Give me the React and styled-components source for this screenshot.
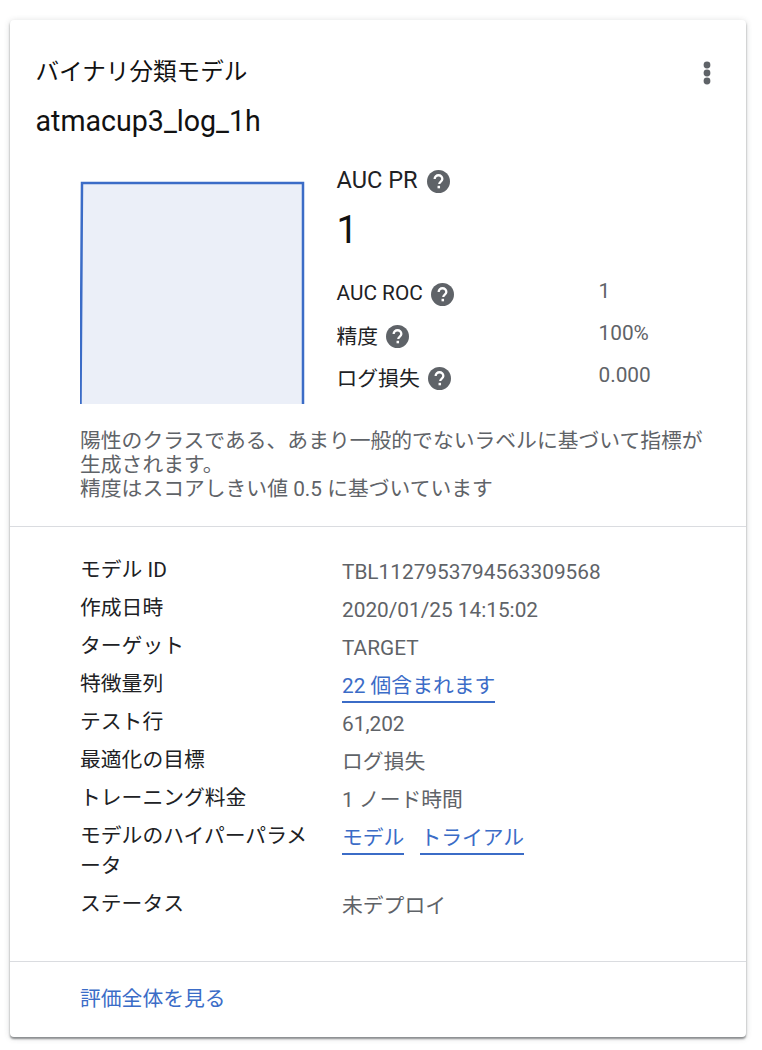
import React from "react";
import styled, { createGlobalStyle } from "styled-components";

const GlobalStyle = createGlobalStyle`
  html, body {
    margin: 0;
    padding: 0;
    background: #fff;
  }
  body {
    font-family: Roboto, "Noto Sans CJK JP", sans-serif;
  }
`;

const Page = styled.div`
  padding: 20px 16px 13px 10px;
`;

const Card = styled.div`
  height: 1017px;
  box-sizing: border-box;
  background: #fff;
  border-radius: 4px;
  box-shadow: 0 2px 2px rgba(60, 64, 67, 0.55), 0 1px 6px rgba(60, 64, 67, 0.2);
  display: flex;
  flex-direction: column;
`;

const Header = styled.div`
  display: flex;
  justify-content: space-between;
  padding: 35px 34px 0 25.5px;
`;

const Titles = styled.div`
  color: #111;
  font-size: 23.6px;
`;

const TitleLine = styled.div`
  line-height: 34px;
  height: 34px;
  margin-bottom: 15px;
`;

const ModelName = styled(TitleLine)`
  font-size: 28.6px;
`;

const MoreButton = styled.svg`
  width: 10px;
  height: 24px;
  margin-top: 6px;
  fill: #5f6368;
`;

const Summary = styled.div`
  display: flex;
  padding: 0 0 0 70px;
`;

const Chart = styled.svg`
  width: 226px;
  height: 224px;
  margin-top: 27px;
  display: block;
`;

const Metrics = styled.div`
  margin-left: 30.5px;
  margin-top: 12px;
  width: 340px;
`;

const MetricHead = styled.div`
  display: flex;
  align-items: center;
  gap: 9px;
  font-size: 23.6px;
  color: #202124;
  height: 30px;
`;

const BigNumber = styled.div`
  font-size: 38px;
  line-height: 44px;
  height: 44px;
  margin: 13px 0 26px;
  color: #111;
`;

const MetricRow = styled.div`
  display: grid;
  grid-template-columns: 262px 1fr;
  height: 42px;
  font-size: 20.8px;
  color: #202124;
`;

const MetricLabel = styled.div`
  display: flex;
  align-items: center;
  gap: 8px;
  height: 30px;
`;

const MetricValue = styled.div`
  color: #5f6368;
  line-height: 26px;
`;

const HelpIcon = styled.svg`
  width: 23px;
  height: 23px;
  flex: none;
  margin-top: 3px;
`;

const Note = styled.div`
  margin: 25px 0 0 70px;
  padding-bottom: 25px;
  width: 635px;
  font-size: 20.8px;
  line-height: 24px;
  color: #5f6368;
`;

const Divider = styled.div`
  height: 1px;
  background: #dadce0;
  flex: none;
`;

const Details = styled.div`
  padding: 24px 0 0 70px;
  flex: 1;
`;

const DetailRow = styled.div`
  display: grid;
  grid-template-columns: 262px 1fr;
  font-size: 20.8px;
  line-height: 30px;
  color: #202124;
`;

const DetailLabel = styled.div`
  width: 232px;
  padding: 4px 0;
`;

const DetailValue = styled.div`
  color: #5f6368;
  display: flex;
  gap: 16px;
  align-items: flex-start;
  padding-top: 6px;
`;

const UnderLink = styled.a`
  color: #3b6cc7;
  line-height: 30px;
  border-bottom: 2px solid #3b6cc7;
`;

const Footer = styled.div`
  height: 75px;
  box-sizing: border-box;
  padding: 0 0 5px 70px;
  display: flex;
  align-items: center;
  font-size: 20.8px;
  color: #3b6cc7;
`;

const Help = () => (
  <HelpIcon viewBox="0 0 24 24">
    <circle cx="12" cy="12" r="12" fill="#5f6368" />
    <path
      d="M8 9.5a4 4 0 0 1 8 0c0 2.6-3.2 2.7-3.2 5.2"
      fill="none"
      stroke="#fff"
      strokeWidth="2.4"
    />
    <rect x="11" y="16.5" width="2.6" height="2.6" fill="#fff" />
  </HelpIcon>
);

const details = [
  { label: "モデル ID", value: "TBL1127953794563309568" },
  { label: "作成日時", value: "2020/01/25 14:15:02" },
  { label: "ターゲット", value: "TARGET" },
  { label: "特徴量列", links: ["22 個含まれます"] },
  { label: "テスト行", value: "61,202" },
  { label: "最適化の目標", value: "ログ損失" },
  { label: "トレーニング料金", value: "1 ノード時間" },
  { label: "モデルのハイパーパラメータ", links: ["モデル", "トライアル"] },
  { label: "ステータス", value: "未デプロイ" },
];

export default function App() {
  return (
    <Page>
      <GlobalStyle />
      <Card>
        <Header>
          <Titles>
            <TitleLine>バイナリ分類モデル</TitleLine>
            <ModelName>atmacup3_log_1h</ModelName>
          </Titles>
          <MoreButton viewBox="0 0 10 24">
            <circle cx="5" cy="4" r="3.4" />
            <circle cx="5" cy="12" r="3.4" />
            <circle cx="5" cy="20" r="3.4" />
          </MoreButton>
        </Header>
        <Summary>
          <Chart viewBox="0 0 226 224">
            <path d="M2 3H223V224H0Z" fill="#ebeff8" />
            <path d="M0.5 224L2 3H223V224" fill="none" stroke="#3b6cc7" strokeWidth="2.5" />
          </Chart>
          <Metrics>
            <MetricHead>
              AUC PR <Help />
            </MetricHead>
            <BigNumber>1</BigNumber>
            <MetricRow>
              <MetricLabel>AUC ROC <Help /></MetricLabel>
              <MetricValue>1</MetricValue>
            </MetricRow>
            <MetricRow>
              <MetricLabel>精度 <Help /></MetricLabel>
              <MetricValue>100%</MetricValue>
            </MetricRow>
            <MetricRow>
              <MetricLabel>ログ損失 <Help /></MetricLabel>
              <MetricValue>0.000</MetricValue>
            </MetricRow>
          </Metrics>
        </Summary>
        <Note>
          陽性のクラスである、あまり一般的でないラベルに基づいて指標が生成されます。
          <br />
          精度はスコアしきい値 0.5 に基づいています
        </Note>
        <Divider />
        <Details>
          {details.map((d) => (
            <DetailRow key={d.label}>
              <DetailLabel>{d.label}</DetailLabel>
              <DetailValue>
                {d.value}
                {d.links && d.links.map((l) => <UnderLink key={l}>{l}</UnderLink>)}
              </DetailValue>
            </DetailRow>
          ))}
        </Details>
        <Divider />
        <Footer>評価全体を見る</Footer>
      </Card>
    </Page>
  );
}
